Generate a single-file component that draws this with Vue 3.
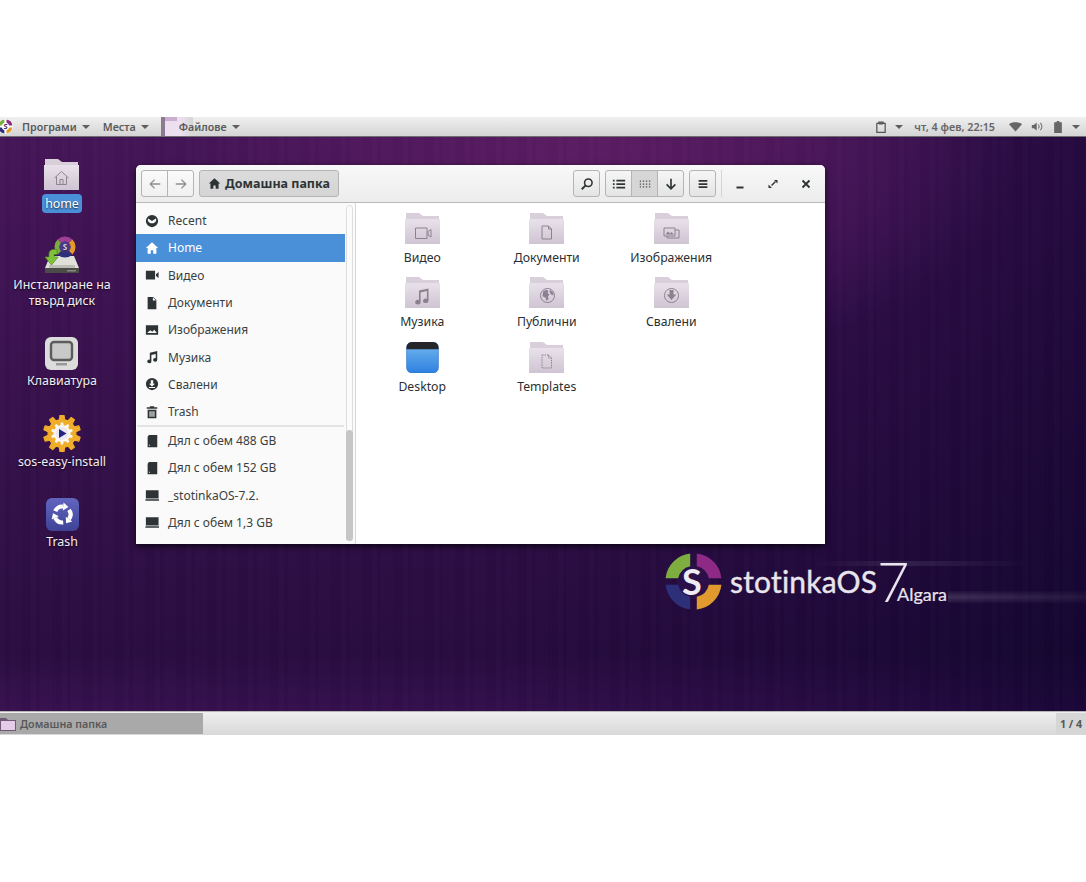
<script setup>
const icons = {
  recent: 'M8 1a7 7 0 1 0 0 14A7 7 0 0 0 8 1zM3.6 5.2 8 8l4.4-2.8A5.4 5.4 0 0 1 12.800 7 5 5 0 0 1 3.200 7a5.4 5.4 0 0 1 .4-1.800z',
  home: 'M8 1.500 1 8h2v6.500h3.600v-4h2.800v4H13V8h2z',
  video: 'M1 3h10.500v10H1zM12.500 7l3-2.400v6.800l-3-2.400z',
  doc: 'M3 1h6.500L13 4.500V15H3zM9 1.500V5h3.500z',
  image: 'M1 2.500h14v11H1zM2.500 11.500h11L10.600 7.600 8.400 10 6 8.200z',
  music: 'M5.500 3 14 1.200v10a2.400 2.100 0 1 1-1.800-2V4.600L7.300 5.700v7.300a2.400 2.100 0 1 1-1.800-2z',
  down: 'M8 1a7 7 0 1 0 0 14A7 7 0 0 0 8 1zM6.600 3.600h2.800v4h2L8 10.800 4.600 7.600h2zM4.500 11.400h7v1.200h-7z',
  trash: 'M5.500 1.400h5v1.200H14v1.800H2V2.600h3.500zM3 5.400h10V15H3zM5.200 7v6.400h1.200V7zM7.400 7v6.400h1.200V7zM9.600 7v6.400h1.200V7z',
  disk: 'M4.500 1H14v14H3V3zM4.600 12.400v1h1v-1z',
  drive: 'M1 2.500h14.500v9.600H1zM0.500 12.800h15.500V14.500H.5z'
}
const places = [
  { t: 'Recent', i: 'recent' },
  { t: 'Home', i: 'home', active: true },
  { t: 'Видео', i: 'video' },
  { t: 'Документи', i: 'doc' },
  { t: 'Изображения', i: 'image' },
  { t: 'Музика', i: 'music' },
  { t: 'Свалени', i: 'down' },
  { t: 'Trash', i: 'trash' }
]
const drives = [
  { t: 'Дял с обем 488 GB', i: 'disk' },
  { t: 'Дял с обем 152 GB', i: 'disk' },
  { t: '_stotinkaOS-7.2.', i: 'drive' },
  { t: 'Дял с обем 1,3 GB', i: 'drive' }
]
const files = [
  { t: 'Видео', e: 'M10.500 12h11.500v10.500H10.500zM23 15.500l3-2v7.500l-3-2z' },
  { t: 'Документи', e: 'M13 10h6.500l3 3v10H13zM19.500 10v3h3' },
  { t: 'Изображения', e: 'M10 12h11v8H10zM21 14h4v8H13v-2', fill: 'M11.500 18.500l2.500-3 2 2 1.500-1.500 2.500 2.500z' },
  { t: 'Музика', fill: 'M14 10.500l9.500-2v12.300a2.700 2.300 0 1 1-1.600-2.100v-7.700l-6.300 1.400v9.800a2.700 2.300 0 1 1-1.600-2.100z' },
  { t: 'Публични', e: 'M18.500 8.500a7 7 0 1 0 .01 0', fill: 'M14 11.500l3-1.800 2.500 1-1 2.200 2 1.300-1.500 2.500 .5 2.500-2 1.500-1-3-3-1.500zM21 9.800l3 2.700 .5 3-2.500-1-1.500-2.500z' },
  { t: 'Свалени', e: 'M17.500 8.500a7 7 0 1 0 .01 0', fill: 'M15.500 10h4v4.500h2.800l-4.800 5.500-4.800-5.500h2.800z' },
  { t: 'Desktop', blue: true },
  { t: 'Templates', e: 'M13 10h6.500l3 3v10H13zM19.500 10v3h3', dash: true }
]
function gear(cx, cy, outer, inner, teeth) {
  const step = (Math.PI * 2) / teeth
  let d = ''
  for (let n = 0; n < teeth; n++) {
    const a = n * step - Math.PI / 2
    const pts = [
      [a - step * 0.3, inner],
      [a - step * 0.17, outer],
      [a + step * 0.17, outer],
      [a + step * 0.3, inner]
    ]
    for (const [ang, r] of pts) {
      d += (d ? 'L' : 'M') + (cx + r * Math.cos(ang)).toFixed(2) + ' ' + (cy + r * Math.sin(ang)).toFixed(2)
    }
  }
  return d + 'z'
}
const gearOuter = gear(19, 18.500, 18.500, 14, 10)
const gearInner = gear(19, 18.500, 11, 8.500, 10)
</script>

<template>
  <div class="screen">
    <svg class="defs" width="0" height="0" aria-hidden="true">
      <defs>
        <linearGradient id="folderFront" x1="0" y1="0" x2="0" y2="1">
          <stop offset="0" stop-color="#e8e1ea" />
          <stop offset="1" stop-color="#cfc4d3" />
        </linearGradient>
        <linearGradient id="blueFill" x1="0" y1="0" x2="0" y2="1">
          <stop offset="0" stop-color="#72b8ee" />
          <stop offset="1" stop-color="#2f80e0" />
        </linearGradient>
        <linearGradient id="recycleFill" x1="0" y1="0" x2="0" y2="1">
          <stop offset="0" stop-color="#6165bf" />
          <stop offset="1" stop-color="#3f4396" />
        </linearGradient>
      </defs>
    </svg>

    <header class="top-panel">
      <svg class="panel-logo" viewBox="0 0 16 16" width="17" height="17">
        <circle cx="7" cy="8" r="7" fill="#fff" />
        <path d="M.5 7A6.500 6.500 0 0 1 6 1.500V4.500A3.500 3.500 0 0 0 3.500 7z" fill="#7cab3e" />
        <path d="M8 1.500A6.500 6.500 0 0 1 13.500 7H10.500A3.500 3.500 0 0 0 8 4.500z" fill="#8d2a80" />
        <path d="M13.500 9A6.500 6.500 0 0 1 8 14.500V11.500A3.500 3.500 0 0 0 10.500 9z" fill="#e39a2d" />
        <path d="M6 14.500A6.500 6.500 0 0 1 .5 9H3.500A3.500 3.500 0 0 0 6 11.500z" fill="#2c2f7c" />
        <text x="7" y="10.400" text-anchor="middle" font-size="7" font-weight="700" fill="#3b2a6a">S</text>
      </svg>
      <span class="menu first">Програми<i class="caret"></i></span>
      <span class="menu second">Места<i class="caret"></i></span>
      <span class="menu third">
        <span class="ghost"></span>
        <span class="menu-text">Файлове<i class="caret"></i></span>
      </span>
      <div class="tray">
        <svg viewBox="0 0 12 14" width="10" height="12">
          <path d="M1 2.500h2.500V1h5v1.500H11V13.500H1z" fill="none" stroke="#555" stroke-width="1.500" />
          <path d="M3.500 1.500h5v2.500h-5z" fill="#555" />
        </svg>
        <i class="caret tray-caret"></i>
        <span class="clock">чт, 4 фев, 22:15</span>
        <svg viewBox="0 0 16 12" width="13" height="10" class="wifi"><path d="M0 2.500C4 -.5 12 -.5 16 2.500L8 11.500z" fill="#666" /></svg>
        <svg viewBox="0 0 16 12" width="13" height="11" class="sound">
          <path d="M1 4h2.500L7 1v10L3.500 8H1z" fill="#666" />
          <path d="M9 3.500a4 4 0 0 1 0 5M11.500 1.500a7 7 0 0 1 0 9" fill="none" stroke="#777" stroke-width="1.300" />
        </svg>
        <svg viewBox="0 0 9 14" width="8" height="12" class="battery"><path d="M3 0h3v1.500h3V14H0V1.500h3z" fill="#666" /></svg>
        <i class="caret last-caret"></i>
      </div>
    </header>

    <main class="desktop">
      <div class="desk-icons">
        <div class="desk-item home-item">
          <svg viewBox="0 0 35 31" width="35" height="31">
            <path d="M1 0h13l4 3h16v8H1z" fill="#d8cfda" />
            <path d="M0 6h35v25H0z" fill="url(#folderFront)" />
            <path d="M10.500 19 17.500 12.500l7 6.500M12.500 17.500v8h10v-8M16 25.500v-5h3v5" fill="none" stroke="#8d8492" stroke-width="1" />
          </svg>
          <span class="selected">home</span>
        </div>

        <div class="desk-item install-item">
          <svg viewBox="0 0 36 38" width="36" height="38">
            <path d="M6 20h24l5 12v4H1v-4z" fill="#dfe0da" />
            <path d="M1 32h34v5H1z" fill="#4b4b48" />
            <path d="M23 34h9v1.500h-9z" fill="#8a8a86" />
            <path d="M5 29h26v3H5z" fill="#bdbdb8" />
            <g fill="none" stroke-width="5">
              <path d="M15.340 5.340A8 8 0 0 1 26.660 5.340" stroke="#a03f96" />
              <path d="M26.660 5.340A8 8 0 0 1 26.660 16.660" stroke="#e39a2d" />
              <path d="M26.660 16.660A8 8 0 0 1 15.340 16.660" stroke="#2c2f7c" />
              <path d="M15.340 16.660A8 8 0 0 1 15.340 5.340" stroke="#7cab3e" />
            </g>
            <circle cx="21" cy="11" r="5.500" fill="#4a3d8c" />
            <text x="21" y="14" text-anchor="middle" font-size="8" font-weight="700" fill="#d9d4ee">S</text>
            <path d="M1 21h4v-3c0-3 2-4.500 4.500-4.500H13v5h-3v2.500h4l-6.500 8z" fill="#7ec23a" stroke="#4e8a1e" stroke-width=".7" />
          </svg>
          <span class="desk-label">Инсталиране на твърд диск</span>
        </div>

        <div class="desk-item keyboard-item">
          <svg viewBox="0 0 33 33" width="33" height="33">
            <rect width="33" height="33" rx="6" fill="#dcdcdc" />
            <rect x="6" y="5" width="21" height="18" rx="3" fill="#c9c9c9" stroke="#5c5c5c" stroke-width="2.400" />
            <rect x="11" y="26" width="11" height="2.500" fill="#999" />
          </svg>
          <span class="desk-label">Клавиатура</span>
        </div>

        <div class="desk-item sos-item">
          <svg viewBox="0 0 38 37" width="38" height="37">
            <path :d="gearOuter" fill="#efad2a" stroke="#efad2a" stroke-width="1.200" stroke-linejoin="round" />
            <path :d="gearInner" fill="#fbf8f0" />
            <circle cx="19" cy="18.500" r="6.500" fill="#e9e8f4" />
            <path d="M16 14l7.500 4.500-7.500 4.500z" fill="#23267a" />
          </svg>
          <span class="desk-label">sos-easy-install</span>
        </div>

        <div class="desk-item recycle-item">
          <svg viewBox="0 0 33 33" width="33" height="33">
            <rect width="33" height="33" rx="6" fill="url(#recycleFill)" />
            <g v-for="r in [0, 120, 240]" :key="r" :transform="`translate(16.500 16.500) rotate(${r})`">
              <path d="M-7.250 -3.380A8 8 0 0 1 .7 -7.970" fill="none" stroke="#fff" stroke-width="4.200" />
              <path d="M1.050 -11.950 5.900 -7.500 .35 -3.990z" fill="#fff" />
            </g>
          </svg>
          <span class="desk-label">Trash</span>
        </div>
      </div>

      <section class="window">
        <div class="titlebar">
          <div class="btn-group nav">
            <button class="btn">
              <svg viewBox="0 0 16 16" width="14" height="14"><path d="M14 8H3M7.500 3 2.500 8l5 5" fill="none" stroke="#8f8f8f" stroke-width="1.500" /></svg>
            </button>
            <button class="btn">
              <svg viewBox="0 0 16 16" width="14" height="14"><path d="M2 8h11M8.500 3l5 5-5 5" fill="none" stroke="#8f8f8f" stroke-width="1.500" /></svg>
            </button>
          </div>
          <button class="btn path-btn">
            <svg viewBox="0 0 16 16" width="13" height="13"><path :d="icons.home" fill="#2e3436" /></svg>
            <span>Домашна папка</span>
          </button>
          <div class="right-tools">
            <button class="btn single">
              <svg viewBox="0 0 16 16" width="14" height="14"><circle cx="9.500" cy="6.500" r="4.300" fill="none" stroke="#2e3436" stroke-width="1.800" /><path d="M6.500 9.500 2 14" stroke="#2e3436" stroke-width="2.200" /></svg>
            </button>
            <div class="btn-group views">
              <button class="btn">
                <svg viewBox="0 0 16 16" width="14" height="14"><path d="M1 3h2v2H1zM1 7h2v2H1zM1 11h2v2H1zM5 3h10v2H5zM5 7h10v2H5zM5 11h10v2H5z" fill="#2e3436" /></svg>
              </button>
              <button class="btn pressed">
                <svg viewBox="0 0 16 16" width="14" height="14"><path d="M2 4h1.500v1.500H2zM5.500 4H7v1.500H5.500zM9 4h1.500v1.500H9zM12.500 4H14v1.500h-1.500zM2 7.300h1.500v1.500H2zM5.500 7.300H7v1.500H5.500zM9 7.300h1.500v1.500H9zM12.500 7.300H14v1.500h-1.500zM2 10.600h1.500v1.500H2zM5.500 10.600H7v1.500H5.500zM9 10.600h1.500v1.500H9zM12.500 10.600H14v1.500h-1.500z" fill="#4a4f50" /></svg>
              </button>
              <button class="btn">
                <svg viewBox="0 0 16 16" width="14" height="14"><path d="M8 2v11M3 8.500 8 13.500l5-5" fill="none" stroke="#2e3436" stroke-width="1.900" /></svg>
              </button>
            </div>
            <button class="btn single">
              <svg viewBox="0 0 16 16" width="14" height="14"><path d="M3 3.500h10v2H3zM3 7h10v2H3zM3 10.500h10v2H3z" fill="#2e3436" /></svg>
            </button>
            <span class="title-sep"></span>
            <div class="wm">
              <svg viewBox="0 0 12 12" width="12" height="12"><path d="M2.500 8.500h7v2h-7z" fill="#2e3436" /></svg>
              <svg viewBox="0 0 12 12" width="12" height="12"><path d="M7 2h3.500v3.500zM5 10H1.500V6.500zM7.800 3.200 4 7 5 8l3.800-3.800z" fill="#2e3436" /></svg>
              <svg viewBox="0 0 12 12" width="12" height="12"><path d="M2.500 2.500l7 7M9.500 2.500l-7 7" stroke="#2e3436" stroke-width="1.900" /></svg>
            </div>
          </div>
        </div>

        <div class="body">
          <aside class="sidebar">
            <div class="rows">
              <div v-for="p in places" :key="p.t" class="row" :class="{ active: p.active }">
                <svg viewBox="0 0 16 16" width="14" height="14"><path :d="icons[p.i]" fill-rule="evenodd" /></svg>
                <span>{{ p.t }}</span>
              </div>
              <div class="row-sep"></div>
              <div v-for="d in drives" :key="d.t" class="row">
                <svg viewBox="0 0 16 16" width="14" height="14"><path :d="icons[d.i]" fill-rule="evenodd" /></svg>
                <span>{{ d.t }}</span>
              </div>
            </div>
            <div class="scroll"><div class="thumb"></div></div>
          </aside>
          <div class="files">
            <div v-for="f in files" :key="f.t" class="file">
              <svg v-if="f.blue" class="file-icon" viewBox="0 0 35 34" width="35" height="34">
                <rect width="35" height="34" rx="6" fill="url(#blueFill)" stroke="#2b6ec0" stroke-width=".6" />
                <path d="M0 8V6a6 6 0 0 1 6-6h23a6 6 0 0 1 6 6v2z" fill="#25262a" />
              </svg>
              <svg v-else class="file-icon" viewBox="0 0 35 31" width="35" height="31">
                <path d="M1 0h13l4 3h16v8H1z" fill="#d8cfda" />
                <path d="M0 6h35v25H0z" fill="url(#folderFront)" />
                <g transform="translate(0 3)">
                  <path v-if="f.e" :d="f.e" fill="none" stroke="#8a8290" stroke-width="1" :stroke-dasharray="f.dash ? '1.500 1' : null" />
                  <path v-if="f.fill" :d="f.fill" fill="#8a8290" />
                </g>
              </svg>
              <span class="file-label">{{ f.t }}</span>
            </div>
          </div>
        </div>
      </section>

      <div class="brand">
        <span class="streak streak-top"></span>
        <span class="streak streak-bottom"></span>
        <svg viewBox="3 3 52 52" width="57" height="57" class="ring">
          <circle cx="29" cy="29" r="16" fill="#2a0f48" />
          <path d="M3.500 26A25.500 25.500 0 0 1 26 3.500V15A14.500 14.500 0 0 0 15 26z" fill="#7fae40" />
          <path d="M32 3.500A25.500 25.500 0 0 1 54.500 26H43A14.500 14.500 0 0 0 32 15z" fill="#8e2a86" />
          <path d="M54.500 32A25.500 25.500 0 0 1 32 54.500V43A14.500 14.500 0 0 0 43 32z" fill="#e09a2e" />
          <path d="M26 54.500A25.500 25.500 0 0 1 3.500 32H15A14.500 14.500 0 0 0 26 43z" fill="#2d2f78" />
        </svg>
        <span class="ring-s">S</span>
        <span class="brand-name">stotinkaOS</span>
        <span class="brand-seven">7</span>
        <span class="brand-sub">Algara</span>
      </div>
    </main>

    <footer class="taskbar">
      <div class="task">
        <svg viewBox="0 0 16 14" width="16" height="14">
          <path d="M0 1h6l2 2h8v11H0z" fill="#6e5a74" />
          <path d="M1 4h14v9H1z" fill="#e5cdea" />
        </svg>
        <span>Домашна папка</span>
      </div>
      <div class="pager">1 / 4</div>
    </footer>
  </div>
</template>

<style>
html, body { margin: 0; background: #fff; }
</style>

<style scoped>
.screen {
  width: 1086px;
  height: 882px;
  padding-top: 117px;
  box-sizing: border-box;
  background: #fff;
  font-family: "Noto Sans", "Open Sans", sans-serif;
  overflow: hidden;
}
.defs { position: absolute; }
.top-panel {
  height: 20px;
  box-sizing: border-box;
  display: flex;
  align-items: center;
  background: linear-gradient(#f0f0f0, #d4d4d4);
  border-bottom: 1px solid #6f6f6f;
  color: #5a5a5a;
  font-size: 10.700px;
  font-weight: 600;
  white-space: nowrap;
}
.panel-logo { flex: none; margin-left: -2px; }
.menu { display: inline-flex; align-items: center; }
.first { margin-left: 7px; }
.second { margin-left: 13px; }
.third { margin-left: 12px; position: relative; width: 88px; height: 19px; }
.ghost {
  position: absolute;
  left: 0;
  top: 0;
  width: 32px;
  height: 19px;
  background:
    linear-gradient(#c9aed2 0 4px, transparent 4px) 4px 0 / 12px 100% no-repeat,
    linear-gradient(#8c7a92, #8c7a92) 0 0 / 4px 100% no-repeat,
    linear-gradient(90deg, #ecdff0 60%, #d6d6d6 100%);
}
.menu-text {
  position: absolute;
  left: 18px;
  top: 0;
  line-height: 20px;
  display: inline-flex;
  align-items: center;
}
.caret {
  display: inline-block;
  width: 0;
  height: 0;
  margin-left: 5px;
  border-left: 4px solid transparent;
  border-right: 4px solid transparent;
  border-top: 4px solid #5f5f5f;
}
.tray { margin-left: auto; display: flex; align-items: center; padding-right: 6px; }
.tray-caret { margin-left: 9px; }
.clock { margin-left: 11px; font-size: 10.800px; color: #666; }
.wifi { margin-left: 14px; }
.sound { margin-left: 9px; }
.battery { margin-left: 10px; }
.last-caret { margin-left: 10px; }

.desktop {
  position: relative;
  height: 574px;
  background:
    repeating-linear-gradient(90deg, rgba(255,255,255,.01) 0 5px, rgba(0,0,0,.012) 5px 9px, rgba(255,255,255,.006) 9px 21px, rgba(0,0,0,.01) 21px 31px),
    radial-gradient(ellipse 430px 240px at 590px 0, #5b1c62 0%, rgba(86,26,96,.7) 50%, transparent 100%),
    linear-gradient(rgba(70,20,88,.35), rgba(20,6,46,.55) 90%, rgba(36,10,64,.4)),
    linear-gradient(90deg, #451558 0%, #3e1254 45%, #2a0c46 75%, #140533 100%);
}
.desk-icons {
  position: absolute;
  left: 0;
  top: 0;
  width: 124px;
  display: flex;
  flex-direction: column;
  align-items: center;
}
.desk-item {
  display: flex;
  flex-direction: column;
  align-items: center;
  text-align: center;
  color: #f2eef4;
  font-size: 12.400px;
  line-height: 16px;
  text-shadow: 0 1px 2px rgba(0,0,0,.8);
}
.home-item { margin-top: 22px; }
.selected {
  margin-top: 4px;
  padding: 2px 3px 1px;
  background: #4a90d9;
  color: #fff;
  border-radius: 4px;
}
.install-item { margin-top: 23px; }
.install-item .desk-label { width: 110px; margin-top: 3px; }
.keyboard-item { margin-top: 28px; }
.keyboard-item .desk-label { margin-top: 3px; }
.sos-item { margin-top: 26px; }
.sos-item .desk-label { margin-top: 2px; }
.recycle-item { margin-top: 28px; }
.recycle-item .desk-label { margin-top: 3px; }

.window {
  position: absolute;
  left: 136px;
  top: 28px;
  width: 689px;
  height: 379px;
  background: #fff;
  border-radius: 5px 5px 0 0;
  box-shadow: 0 2px 6px rgba(0,0,0,.75);
  overflow: hidden;
}
.titlebar {
  height: 38px;
  box-sizing: border-box;
  display: flex;
  align-items: center;
  padding: 0 0 0 5px;
  background: linear-gradient(#f8f8f8, #ececec);
  border-bottom: 1px solid #b9b9b9;
}
.btn {
  height: 27px;
  padding: 0;
  display: flex;
  align-items: center;
  justify-content: center;
  background: linear-gradient(#f6f6f6, #e4e4e4);
  border: 1px solid #b4b4b4;
  border-radius: 3px;
  font: inherit;
  box-sizing: border-box;
}
.btn-group { display: flex; }
.btn-group .btn { width: 27px; border-radius: 0; margin-left: -1px; }
.btn-group .btn:first-child { margin-left: 0; border-radius: 3px 0 0 3px; }
.btn-group .btn:last-child { border-radius: 0 3px 3px 0; }
.nav .btn { background: linear-gradient(#fafafa, #f0f0f0); }
.path-btn {
  margin-left: 5px;
  width: 140px;
  gap: 4px;
  background: linear-gradient(#dcdcdc, #d4d4d4);
  color: #2e3436;
  font-size: 12.500px;
  font-weight: 700;
}
.pressed { background: #d6d6d6 !important; }
.right-tools { margin-left: auto; display: flex; align-items: center; }
.single { width: 27px; }
.views { margin: 0 5px; }
.title-sep { width: 1px; height: 27px; background: #d4d4d4; margin-left: 5px; }
.wm { width: 103px; display: flex; justify-content: space-between; padding: 0 13px 0 12px; box-sizing: border-box; }

.body { display: flex; height: 341px; }
.sidebar {
  width: 220px;
  flex: none;
  position: relative;
  background: #fafafa;
  border-right: 1px solid #d8d8d8;
  box-sizing: border-box;
}
.rows { width: 209px; padding-top: 4px; }
.row {
  height: 27.300px;
  display: flex;
  align-items: center;
  padding-left: 9px;
  gap: 9px;
  font-size: 12px;
  color: #3a3f41;
}
.row svg { fill: #2e3436; flex: none; }
.row.active { background: #4a90d9; color: #fff; }
.row.active svg { fill: #fff; }
.row-sep { height: 1.500px; background: #e4e4e4; margin: 0 1px; }
.scroll {
  position: absolute;
  right: 2px;
  top: 2px;
  bottom: 3px;
  width: 5px;
  border: 1px solid #dedede;
  border-radius: 4px;
  background: #fbfbfb;
}
.thumb {
  position: absolute;
  left: -1px;
  right: -1px;
  bottom: -1px;
  height: 111px;
  background: #c6c6c6;
  border-radius: 4px;
}
.files {
  flex: 1;
  display: grid;
  grid-template-columns: repeat(3, 124.500px);
  grid-auto-rows: 64.400px;
  padding: 10px 0 0 4px;
  background: #fff;
}
.file {
  display: flex;
  flex-direction: column;
  align-items: center;
  position: relative;
}
.file-icon { flex: none; height: 31px; }
.file-label {
  margin-top: 5px;
  font-size: 12.250px;
  line-height: 18px;
  color: #2b2f31;
}
.brand {
  position: absolute;
  left: 664px;
  top: 415px;
  width: 422px;
  height: 58px;
  color: #e9e5ec;
}
.ring { position: absolute; left: 1px; top: 1px; }
.ring-s {
  position: absolute;
  left: 18px;
  top: 7px;
  font-family: "Lato", sans-serif;
  font-size: 36px;
  line-height: 44px;
  font-weight: 700;
  color: #eeecf2;
}
.brand-name {
  position: absolute;
  left: 66px;
  top: 10px;
  font-family: "Lato", sans-serif;
  font-size: 30px;
  line-height: 38px;
  letter-spacing: .2px;
  -webkit-text-stroke: .4px #e9e5ec;
}
.brand-seven {
  position: absolute;
  left: 213px;
  top: 1px;
  font-family: "Lato", sans-serif;
  font-size: 56px;
  line-height: 56px;
  font-weight: 300;
}
.brand-sub {
  position: absolute;
  left: 233px;
  top: 30px;
  font-family: "Lato", sans-serif;
  font-size: 18px;
  line-height: 24px;
  -webkit-text-stroke: .2px #e9e5ec;
}
.streak { position: absolute; height: 5px; }
.streak-top {
  left: 150px;
  top: 9px;
  width: 220px;
  background: linear-gradient(90deg, transparent, rgba(255,255,255,.09) 40%, transparent);
}
.streak-bottom {
  left: 284px;
  top: 39px;
  width: 138px;
  height: 12px;
  background: linear-gradient(rgba(255,255,255,.03), rgba(255,255,255,.16) 50%, rgba(255,255,255,.03));
  -webkit-mask-image: linear-gradient(90deg, #000, rgba(0,0,0,.4));
  mask-image: linear-gradient(90deg, #000, rgba(0,0,0,.4));
}
.taskbar {
  height: 24px;
  box-sizing: border-box;
  display: flex;
  justify-content: space-between;
  align-items: stretch;
  padding: 1px 0;
  background: linear-gradient(#efefef, #d8d8d8);
  border-top: 1px solid #b5b5b5;
  color: #585858;
  font-size: 10.700px;
  font-weight: 600;
}
.task {
  width: 203px;
  display: flex;
  align-items: center;
  gap: 4px;
  background: #a9a9a9;
}
.pager {
  width: 30px;
  display: flex;
  align-items: center;
  justify-content: center;
  background: #d6d6d6;
  white-space: nowrap;
  font-weight: 700;
}
</style>
